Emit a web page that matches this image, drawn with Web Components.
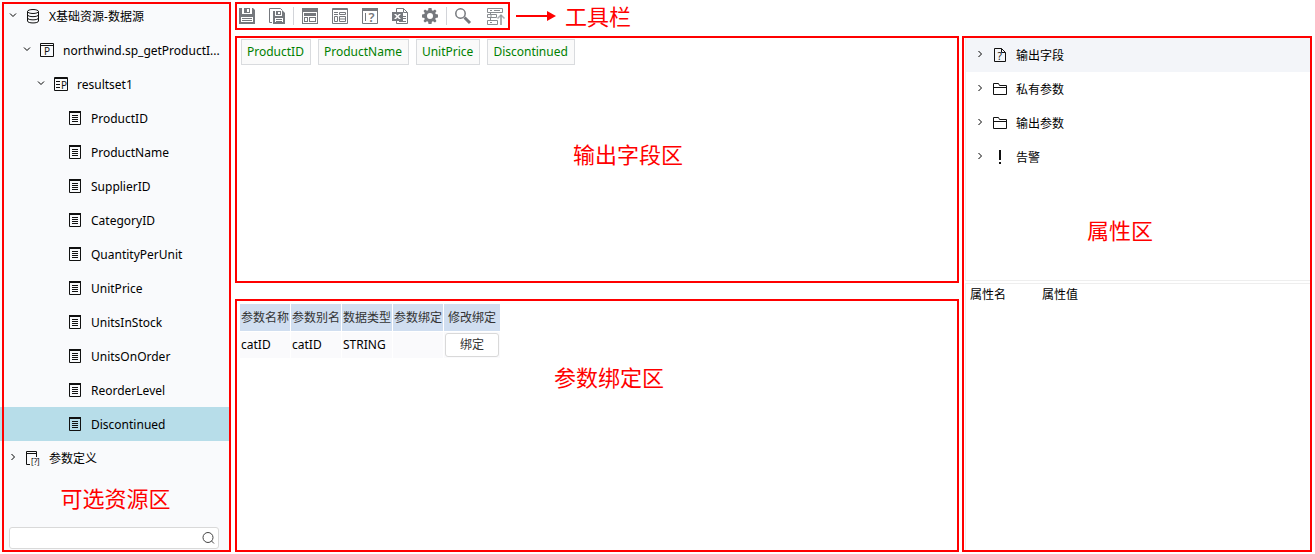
<!DOCTYPE html>
<html lang="zh-CN">
<head>
<meta charset="utf-8">
<title>数据集设计</title>
<style>
html, body { height: 100%; }
body { margin: 0; background: #fff; color: #000; font: 12px/16px "Noto Sans", "Noto Sans CJK SC", sans-serif; }
</style>
</head>
<body>
<dataset-designer></dataset-designer>
<script>
const P = 'fill="none" stroke="currentColor"';
const ICONS = {
  database: `<g ${P}><ellipse cx="8" cy="3.5" rx="5.5" ry="2"/><path d="M2.5 3.5v9.5c0 2.6 11 2.6 11 0V3.5M2.5 6.7c0 2.6 11 2.6 11 0M2.5 9.9c0 2.6 11 2.6 11 0"/></g>`,
  procedure: `<path ${P} d="M1.5 1.5h13v13h-13zM1.5 3.5h13"/><text x="5" y="12.500" font-size="10" font-family="Noto Sans" fill="currentColor">P</text>`,
  resultset: `<path ${P} d="M1.5 1.500h13v13h-13zM1.500 2.500h13M3 5.500h4M3 8.500h4M3 11.500h4"/><text x="8" y="12.500" font-size="10" font-family="Noto Sans" fill="currentColor">P</text>`,
  field: `<path ${P} d="M2.500 2v12.500h11V2M5 5.500h6M5 7.500h6M5 9.500h6M5 11.500h6"/><path d="M2 1h12v2H2z" fill="currentColor"/>`,
  params: `<path ${P} d="M5 14.500H1.500v-13h10V7M1.500 3.500h10"/><text x="6" y="15" font-size="8" font-family="Noto Sans" fill="currentColor">[?]</text>`,
  file: `<path ${P} d="M2.500 1.500h7l4 4v9h-11zM9.500 1.500v4h4"/><text x="5.500" y="12.500" font-size="10" font-family="Noto Sans" fill="currentColor">?</text>`,
  folder: `<path ${P} d="M1.500 13.500v-11h5l1 2h7v9zM1.500 6.500h13"/>`,
  alert: `<path d="M7 1h2v10H7zM7 13h2v2H7z" fill="currentColor"/>`,
  save: `<path fill="currentColor" fill-rule="evenodd" d="M0 0h3v6h10V0h1l2 2v14H0zM5 0h6v5H5zM8 1v3h2V1zM2 9v5h12V9zM3 10h10v1H3zM3 12h10v1H3z"/>`,
  saveas: `<path ${P} d="M3 14.500H.5V.500h11l2 2"/><path fill="currentColor" fill-rule="evenodd" d="M4 3h2v5h7V3h1l2 2v11H4zM7 3h5v4H7zM9 4v2h2V4zM6 10v4h8v-4zM7 11h6v1H7zM7 13h6v1H7z"/>`,
  layout: `<path fill="currentColor" fill-rule="evenodd" d="M0 0h16v16H0zM1 4v11h14V4zM2 5h12v3H2zM2 9h4v5H2zM3 10v3h2v-3zM7 9h7v5H7zM8 10v3h5v-3z"/>`,
  form: `<path ${P} d="M.5.500h15v15H.500zM0 1.500h16M2 4.500h4M7.500 4.500h6v2h-6zM2.500 8.500h3v5h-3zM7.500 8.500h6v5h-6zM2 6.500h4M8 11h5"/>`,
  help: `<path ${P} d="M.5.500h15v15H.500zM3.500 5v8"/><path fill="currentColor" d="M0 0h16v3H0z"/><text x="6.500" y="14" font-size="13" font-family="Noto Sans" font-weight="600" fill="currentColor">?</text>`,
  excel: `<path ${P} d="M4.500 4V.500h7l4 4v11h-11V13M11.500.500v4h4M11 8.500h3M11 10.500h3M7 13.500h7"/><path fill="currentColor" fill-rule="evenodd" d="M0 4h11v9H0zM2 6l2.500 2.500L2 11h2l1.500-1.500L7 11h2L6.500 8.500 9 6H7L5.500 7.500 4 6z"/>`,
  gear: `<path fill="currentColor" fill-rule="evenodd" d="M6.500 0h3l.4 2.300 1.100.5L13 1.500 14.500 3l-1.300 2 .5 1.100 2.300.4v3l-2.300.4-.5 1.100 1.300 2-1.500 1.500-2-1.300-1.100.5-.4 2.300h-3l-.4-2.300-1.100-.5-2 1.300L1.500 13l1.300-2-.5-1.100L0 9.500v-3l2.300-.4.5-1.100-1.300-2L3 1.500l2 1.300 1.100-.5zM8 5a3 3 0 100 6 3 3 0 000-6z"/>`,
  zoom: `<circle cx="5.500" cy="5.500" r="4.700" ${P} stroke-width="1.500"/><path d="M9.500 9.500l5.500 5.500" ${P} stroke-width="3"/>`,
  publish: `<g opacity=".85"><path ${P} d="M.500.500h15v4H.500zM.500 6.500h9v3H.500zM.500 12.500h10v4H.500zM3 2.500h2M7 2.500h6M3 8h2M3 14.500h2M3.500 4.500v2M3.500 9.500v3"/><path ${P} stroke-width="2" d="M14 17V7" opacity=".7"/><path ${P} stroke-width="1.500" d="M10.500 10.500L14 7l3.500 3.500" opacity=".7"/></g>`,
  search: `<circle cx="8" cy="7.500" r="5" ${P}/><path ${P} d="M11.500 11l2.500 2.500"/>`
};
function define(name, css, html) {
  customElements.define(name, class extends HTMLElement {
    constructor() {
      super();
      this.attachShadow({ mode: 'open' }).innerHTML =
        `<style>*{box-sizing:border-box}${css}</style>` + (typeof html === 'function' ? html(this) : html);
    }
  });
}
define('ui-icon', ':host{display:block;flex:none;width:16px;height:16px}svg{display:block;overflow:visible}',
  el => `<svg width="16" height="16" viewBox="0 0 16 16" aria-hidden="true">${ICONS[el.getAttribute('name')]}</svg>`);

define('region-label', ':host{display:block;color:#f00;font-size:22px;line-height:26px;text-align:center}', '<slot></slot>');

define('tree-row', `
:host{display:flex;align-items:center;height:34px;padding-left:8px;white-space:nowrap}
:host([level="1"]){padding-left:22px}
:host([level="2"]){padding-left:36px}
:host([level="3"]){padding-left:50px}
:host([selected]){background:#b7dde9}
:host([active]){background:#f3f5f9}
.arrow{flex:none;width:10px;height:16px;margin-right:7px}
ui-icon{margin-right:8px;color:#111}
span{padding-top:2px}`,
  el => {
    const d = { open: 'M2 5.500l3 3 3-3', closed: 'M3.500 4l3 3-3 3' }[el.getAttribute('state')] || '';
    return `<svg class="arrow" viewBox="0 0 10 16" aria-hidden="true"><path ${P} d="${d}"/></svg>
      <ui-icon name="${el.getAttribute('icon')}"></ui-icon><span><slot></slot></span>`;
  });

define('resource-panel', `
:host{position:relative;display:flex;flex-direction:column;background:#f9fafc;padding-bottom:3px}
:host::after{content:"";position:absolute;inset:2px 0 0 2px;border:2px solid #f00;pointer-events:none}
.tree{margin-top:-1px}
region-label{margin:10px 0 auto}
label{display:flex;align-items:center;height:22px;margin:0 12px 0 9px;padding-right:2px;background:#fff;border:1px solid #d9d9d9;border-radius:3px;color:#444}
input{flex:1;min-width:0;height:18px;border:0;outline:0;background:none;font:inherit}`,
`<div class="tree">
<tree-row state="open" icon="database">X基础资源-数据源</tree-row>
<tree-row level="1" state="open" icon="procedure">northwind.sp_getProductI...</tree-row>
<tree-row level="2" state="open" icon="resultset">resultset1</tree-row>
${['ProductID','ProductName','SupplierID','CategoryID','QuantityPerUnit','UnitPrice','UnitsInStock','UnitsOnOrder','ReorderLevel','Discontinued']
  .map(n => `<tree-row level="3" icon="field"${n === 'Discontinued' ? ' selected' : ''}>${n}</tree-row>`).join('')}
<tree-row state="closed" icon="params">参数定义</tree-row>
</div>
<region-label>可选资源区</region-label>
<label><input type="text" aria-label="搜索"><ui-icon name="search"></ui-icon></label>`);

const tool = (n, t) => `<button type="button" aria-label="${t}"><ui-icon name="${n}"></ui-icon></button>`;
define('tool-bar', `
:host{display:flex;align-items:center;height:28px}
.bar{display:flex;align-items:center;width:275px;height:28px;padding:0 2px;border:2px solid #f00;color:#75787d}
.group{display:flex;gap:14px}
.group:last-child{gap:16px}
i{width:1px;height:18px;margin:0 8px;background:#d2d4d9}
button{width:16px;height:16px;padding:0;border:0;background:none;color:inherit}
.arrow{margin:0 9px 0 6px}`,
`<div class="bar"><div class="group">${tool('save','保存')}${tool('saveas','另存为')}</div><i></i>
<div class="group">${tool('layout','布局')}${tool('form','表单')}${tool('help','帮助')}${tool('excel','导出')}${tool('gear','设置')}</div><i></i>
<div class="group">${tool('zoom','预览')}${tool('publish','发布')}</div></div>
<svg class="arrow" width="40" height="10" aria-hidden="true"><path d="M0 5h33" stroke="#f00" stroke-width="2"/><path d="M31 0l9 5-9 5z" fill="#f00"/></svg>
<region-label>工具栏</region-label>`);

define('field-panel', `
:host{display:block;border:2px solid #f00;padding:1px 4px}
ul{display:flex;flex-wrap:wrap;gap:7px;margin:0;padding:0;list-style:none}
li{padding:4px 6px 4px 5px;border:1px solid #d9dbde;background:#fafafa;color:#008000}
region-label{margin-top:76px;padding-left:62px}`,
`<ul><li>ProductID</li><li>ProductName</li><li>UnitPrice</li><li>Discontinued</li></ul><region-label>输出字段区</region-label>`);

define('binding-panel', `
:host{display:block;border:2px solid #f00;padding:2px}
table{border-collapse:separate;border-spacing:1px;table-layout:fixed;width:262px}
th,td{padding:0 1px;text-align:left;font-weight:400;white-space:nowrap}
th{height:27px;background:#d0def0;color:#333}
td{height:26px;background:#fafafc}
.last{width:56px;text-align:center}
button{display:block;width:54px;height:24px;padding:0;border:1px solid #d9d9d9;border-radius:3px;background:#fff;color:#333;font:inherit}
region-label{margin-top:5px;padding-left:24px}`,
`<table><thead><tr><th>参数名称</th><th>参数别名</th><th>数据类型</th><th>参数绑定</th><th class="last">修改绑定</th></tr></thead>
<tbody><tr><td>catID</td><td>catID</td><td>STRING</td><td></td><td class="last"><button type="button">绑定</button></td></tr></tbody></table>
<region-label>参数绑定区</region-label>`);

define('property-panel', `
:host{display:flex;flex-direction:column;border:2px solid #f00;padding-left:1px}
.top{height:243px;border:solid #eee;border-width:0 0 1px 1px}
.bottom{flex:1;margin-top:2px;border:solid #eee;border-width:1px 0 0 1px}
tree-row{padding-left:9px}
region-label{margin-top:43px;padding-right:36px}
table{border-spacing:0;margin-top:3px}
th{width:72px;padding:0 4px;text-align:left;font-weight:400;box-sizing:border-box}`,
`<div class="top"><tree-row active state="closed" icon="file">输出字段</tree-row>
<tree-row state="closed" icon="folder">私有参数</tree-row>
<tree-row state="closed" icon="folder">输出参数</tree-row>
<tree-row state="closed" icon="alert">告警</tree-row>
<region-label>属性区</region-label></div>
<div class="bottom"><table><thead><tr><th>属性名</th><th>属性值</th></tr></thead></table></div>`);

define('dataset-designer', `
:host{display:flex;gap:4px;min-height:100%;padding:0 3px 2px 0;box-sizing:border-box}
resource-panel{flex:none;width:231px}
main{flex:1;min-width:0;display:flex;flex-direction:column;gap:6px;padding-top:2px}
.work{flex:1;display:flex;gap:3px}
.center{flex:1;min-width:0;display:flex;flex-direction:column;gap:16px}
field-panel{height:247px}
binding-panel{flex:1}
property-panel{flex:none;width:350px}`,
`<resource-panel></resource-panel>
<main><tool-bar></tool-bar>
<div class="work"><div class="center"><field-panel></field-panel><binding-panel></binding-panel></div><property-panel></property-panel></div></main>`);
</script>
</body>
</html>
